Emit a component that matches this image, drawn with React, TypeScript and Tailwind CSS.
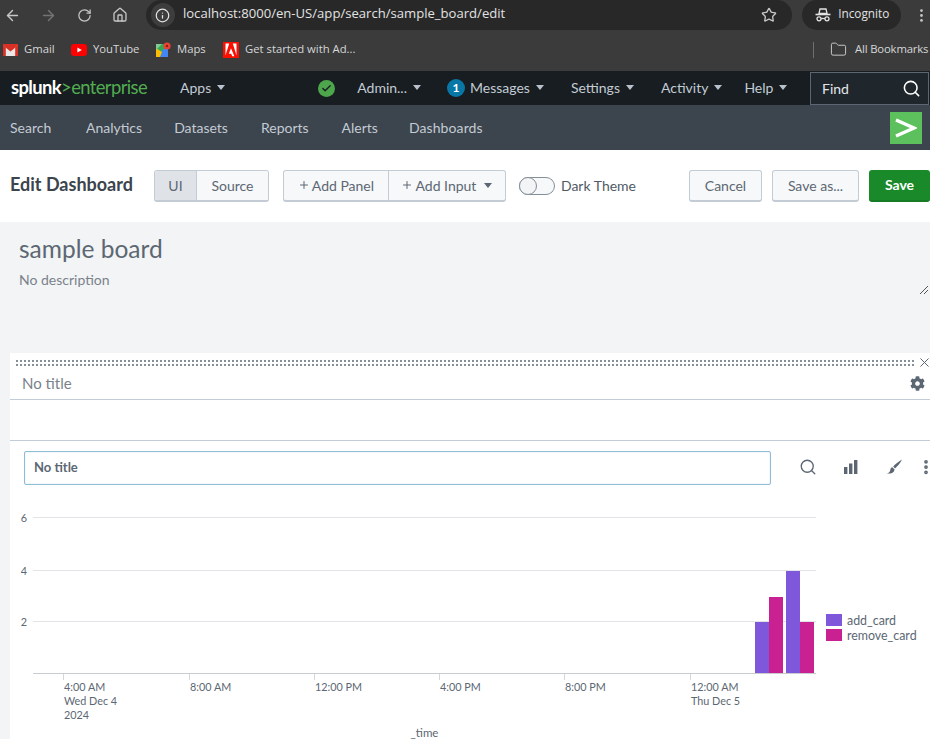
import React from "react";
import { ArrowLeft, ArrowRight, RotateCw, House, Info, Star, EllipsisVertical, Folder, Search, Check, X, Plus } from "lucide-react";
import { FaCog } from "react-icons/fa";

const Caret = ({ className = "border-t-[#b9c2cc]" }: { className?: string }) => (
    <span className={`inline-block ml-[6px] w-0 h-0 border-x-[4px] border-x-transparent border-t-[5px] ${className}`} />
);

const Bookmark = ({ icon, label, className }: { icon: React.ReactNode; label: string; className: string }) => (
    <div className={`flex items-center ${className}`}>
        {icon}
        <span className="ml-[6px] text-[11.3px] text-[#d5d7d9]">{label}</span>
    </div>
);

const TopItem = ({ label, className }: { label: string; className: string }) => (
    <div className={`flex items-center text-[14px] text-[#c3cbd4] ${className}`}>
        {label}
        <Caret />
    </div>
);

const GmailIcon = () => (
    <svg width="15" height="12" viewBox="0 0 16 12" preserveAspectRatio="none">
        <rect width="16" height="12" rx="1" fill="#e8e8e8" />
        <path d="M0 1.5 8 7.5 16 1.5V0H0Z" fill="#d93025" />
        <path d="M0 1v11h3V3.5ZM16 1v11h-3V3.5Z" fill="#d93025" />
    </svg>
);

const YoutubeIcon = () => (
    <svg width="16" height="12" viewBox="0 0 16 12">
        <rect width="16" height="12" rx="3" fill="#ff0000" />
        <path d="M6.4 3.4 10.8 6 6.4 8.6Z" fill="#fff" />
    </svg>
);

const MapsIcon = () => (
    <svg width="15" height="15" viewBox="0 0 15 15">
        <rect y="2" width="12" height="13" fill="#34a853" />
        <path d="M0 15 12 3v12Z" fill="#4285f4" />
        <path d="M0 6 6 10 4 15H0Z" fill="#fbbc04" />
        <path d="M0 2h6L0 8Z" fill="#81c995" />
        <circle cx="11" cy="4" r="3.6" fill="#ea4335" />
        <circle cx="11" cy="4" r="1.2" fill="#8c1d18" />
    </svg>
);

const AdobeIcon = () => (
    <svg width="16" height="16" viewBox="0 0 16 16">
        <rect width="16" height="16" fill="#fa0f00" />
        <path d="M6.2 1.5H2.5v12ZM9.8 1.5h3.7v12ZM8 6.2l3.4 8H9.2l-1-2.5H5.8Z" fill="#fff" />
    </svg>
);

const IncognitoIcon = () => (
    <svg width="16" height="14" viewBox="0 0 16 14" fill="none" stroke="#e3e3e3" strokeWidth="1.3">
        <path d="M5 1h6l1 4.4H4Z" />
        <path d="M0.5 6.5h15" strokeWidth="1.6" />
        <circle cx="4" cy="10.8" r="2" />
        <circle cx="12" cy="10.8" r="2" />
        <path d="M6 10.5h4" />
    </svg>
);

const BarsIcon = () => (
    <svg width="14" height="14" viewBox="0 0 14 14" fill="#5c6773">
        <rect y="7" width="3.4" height="7" />
        <rect x="5" y="3.5" width="3.4" height="10.5" />
        <rect x="10" width="3.4" height="14" />
    </svg>
);

const BrushIcon = () => (
    <svg width="15" height="15" viewBox="0 0 15 15" fill="#5c6773">
        <path d="M15 0.5C12 2 8.5 5 6.2 7.6L8 9.4C10.6 7.2 13.4 4 15 0.5ZM5.4 8.3C3.2 8.6 3.6 11 2.8 12.4 2.2 13.4 1.2 13.8 0 14.5 3.5 15 7 14 7.6 10.4Z" />
    </svg>
);

const xTicks = [
    { x: 63.5, lines: ["4:00 AM", "Wed Dec 4", "2024"] },
    { x: 189.5, lines: ["8:00 AM"] },
    { x: 314.5, lines: ["12:00 PM"] },
    { x: 439.5, lines: ["4:00 PM"] },
    { x: 564.5, lines: ["8:00 PM"] },
    { x: 690.5, lines: ["12:00 AM", "Thu Dec 5"] },
];

const yTicks = [
    { y: 517.5, label: "6" },
    { y: 570.5, label: "4" },
    { y: 621.5, label: "2" },
];

const bars = [
    { x: 755, w: 14, top: 622, fill: "#7e57db" },
    { x: 769, w: 14, top: 597, fill: "#c92092" },
    { x: 786, w: 14, top: 571, fill: "#7e57db" },
    { x: 800, w: 14, top: 622, fill: "#c92092" },
];

// svg coordinates = page coordinates, chart starts at y 505
const Chart = () => (
    <svg width="930" height="234" viewBox="0 505 930 234" className="block" fontFamily="Lato, sans-serif" fontSize="10.8" fill="#5c6773">
        {yTicks.map((t) => (
            <g key={t.label}>
                <line x1="33" x2="816" y1={t.y} y2={t.y} stroke="#e1e4e6" />
                <text x="24" y={t.y + 4} textAnchor="middle">{t.label}</text>
            </g>
        ))}
        {bars.map((b) => (
            <rect key={b.x} x={b.x} y={b.top} width={b.w} height={673 - b.top} fill={b.fill} />
        ))}
        <line x1="33" x2="816" y1="673.5" y2="673.5" stroke="#c8cccf" />
        {xTicks.map((t) => (
            <g key={t.x}>
                <line x1={t.x} x2={t.x} y1="674" y2="680" stroke="#d5d8da" />
                {t.lines.map((l, i) => (
                    <text key={l} x={t.x + 0.5} y={691 + i * 14}>{l}</text>
                ))}
            </g>
        ))}
        <text x="424.5" y="737" textAnchor="middle" fontSize="11.5">_time</text>
        <rect x="826" y="614" width="16" height="12" fill="#7e57db" />
        <rect x="826" y="629" width="16" height="12" fill="#c92092" />
        <text x="847" y="625" fontSize="12.4">add_card</text>
        <text x="847" y="640" fontSize="12.4">remove_card</text>
    </svg>
);

const App: React.FC = () => {
    return (
        <div className="w-[930px] h-[739px] overflow-hidden bg-[#f2f4f5] font-['Lato',sans-serif]">
            {/* browser toolbar */}
            <div className="h-[30px] bg-[#3b3b3b] flex items-center font-['Open_Sans',sans-serif]">
                <ArrowLeft size={17} className="ml-[4px] text-[#c7c7c7]" />
                <ArrowRight size={17} className="ml-[19px] text-[#747474]" />
                <RotateCw size={15} className="ml-[20px] text-[#c7c7c7]" />
                <House size={16} className="ml-[20px] text-[#c7c7c7]" />
                <div className="ml-[18px] w-[647px] h-[30px] rounded-[15px] bg-[#282828] flex items-center">
                    <div className="ml-[5px] w-[24px] h-[24px] rounded-full bg-[#3d3d3d] flex items-center justify-center">
                        <Info size={15} className="text-[#e3e3e3]" />
                    </div>
                    <span className="ml-[8px] mb-[2px] text-[13.1px] text-[#e3e3e3]">localhost:8000/en-US/app/search/sample_board/edit</span>
                    <Star size={16} className="ml-auto mr-[15px] text-[#c7c7c7]" />
                </div>
                <div className="ml-[10px] w-[99px] h-[30px] rounded-[15px] bg-[#282828] flex items-center">
                    <div className="ml-[13px]"><IncognitoIcon /></div>
                    <span className="ml-[7px] mb-[2px] text-[11.8px] text-[#e3e3e3]">Incognito</span>
                </div>
                <EllipsisVertical size={17} className="ml-[12px] text-[#c7c7c7]" />
            </div>
            {/* bookmarks */}
            <div className="h-[41px] bg-[#3b3b3b] flex items-center pb-[2px] font-['Open_Sans',sans-serif]">
                <Bookmark className="ml-[3px] w-[68px]" icon={<GmailIcon />} label="Gmail" />
                <Bookmark className="w-[85px]" icon={<YoutubeIcon />} label="YouTube" />
                <Bookmark className="w-[67px]" icon={<MapsIcon />} label="Maps" />
                <Bookmark className="w-[140px]" icon={<AdobeIcon />} label="Get started with Ad..." />
                <div className="ml-auto w-[1px] h-[16px] bg-[#6f6f6f]" />
                <Folder size={17} className="ml-[16px] shrink-0 text-[#c7c7c7]" strokeWidth={1.4} />
                <span className="ml-[8px] w-[75px] text-[11.3px] tracking-[-0.15px] whitespace-nowrap text-[#d5d7d9]">All Bookmarks</span>
            </div>
            {/* splunk bar */}
            <div className="h-[34px] bg-[#171d21] flex items-center">
                <div className="ml-[11px] w-[135px] pb-[2px] text-[18.4px] tracking-[-0.6px] leading-none whitespace-nowrap">
                    <span className="font-bold text-white">splunk</span>
                    <span className="text-[#52ad50]">&gt;enterprise</span>
                </div>
                <TopItem className="ml-[34px] pb-[2px]" label="Apps" />
                <div className="ml-[93px] w-[17px] h-[17px] rounded-full bg-[#4ea64c] flex items-center justify-center">
                    <Check size={11} strokeWidth={3} className="text-[#171d21]" />
                </div>
                <TopItem className="ml-[22px] pb-[2px]" label="Admin..." />
                <div className="ml-[26px] w-[18px] h-[18px] rounded-full bg-[#0877a6] text-white text-[12px] font-bold flex items-center justify-center">1</div>
                <TopItem className="ml-[5px] pb-[2px]" label="Messages" />
                <TopItem className="ml-[27px] pb-[2px]" label="Settings" />
                <TopItem className="ml-[27px] pb-[2px]" label="Activity" />
                <TopItem className="ml-[22px] pb-[2px]" label="Help" />
                <div className="ml-auto mr-[1px] w-[119px] h-[33px] self-end border border-[#5c6773] bg-[#1f262c] flex items-center pl-[11px] pr-[7px] text-[14px] text-[#e1e6eb]">
                    Find
                    <Search size={19} className="ml-auto text-white" strokeWidth={2} />
                </div>
            </div>
            {/* app bar */}
            <div className="h-[45px] bg-[#3c444d] flex items-center text-[14px] text-[#c3cbd4]">
                <span className="ml-[10px] w-[43px] mb-[1px]">Search</span>
                <span className="ml-[33px] mb-[1px]">Analytics</span>
                <span className="ml-[32px] mb-[1px]">Datasets</span>
                <span className="ml-[33px] mb-[1px]">Reports</span>
                <span className="ml-[33px] mb-[1px]">Alerts</span>
                <span className="ml-[31px] mb-[1px] tracking-[0.1px]">Dashboards</span>
                <div className="ml-auto mr-[8px] w-[32px] h-[32px] bg-[#5cc05c] flex items-center justify-center">
                    <svg width="22" height="22" viewBox="0 0 22 22" fill="none" stroke="#fff" strokeWidth="3.4">
                        <path d="M1 3 19 11 1 19" />
                    </svg>
                </div>
            </div>
            {/* edit bar */}
            <div className="h-[72px] bg-white flex items-center text-[14px] text-[#5c6773]">
                <span className="ml-[10px] mb-[3px] text-[18px] font-bold text-[#3c444d] whitespace-nowrap">Edit Dashboard</span>
                <div className="ml-[21px] h-[32px] shrink-0 flex rounded-[3px] border border-[#c3cbd4] border-b-2 overflow-hidden">
                    <div className="w-[42px] pb-[1px] bg-[#dfe3e8] border-r border-[#c3cbd4] flex items-center justify-center">UI</div>
                    <div className="w-[71px] pb-[1px] bg-[#f7f8fa] flex items-center justify-center">Source</div>
                </div>
                <div className="ml-[14px] h-[32px] shrink-0 flex rounded-[3px] border border-[#c3cbd4] border-b-2 overflow-hidden bg-[#f7f8fa]">
                    <div className="w-[105px] pb-[1px] border-r border-[#c3cbd4] flex items-center justify-center"><Plus size={12} className="mr-[2px]" />Add Panel</div>
                    <div className="w-[116px] pb-[1px] flex items-center justify-center"><Plus size={12} className="mr-[2px]" />Add Input<Caret className="border-t-[#5c6773] ml-[8px]" /></div>
                </div>
                <div className="ml-[13px] relative shrink-0 w-[36px] h-[18px] rounded-full border border-[#868e96] bg-[#f7f8fa]">
                    <div className="absolute left-[-1px] top-[-1px] w-[18px] h-[18px] rounded-full border border-[#868e96] bg-[#f2f4f5]" />
                </div>
                <span className="ml-[6px] mb-[1px] text-[#4f5a65] whitespace-nowrap">Dark Theme</span>
                <div className="ml-[53px] w-[73px] pb-[1px] shrink-0 h-[32px] rounded-[3px] border border-[#c3cbd4] border-b-2 bg-[#f7f8fa] flex items-center justify-center">Cancel</div>
                <div className="ml-[10px] w-[87px] pb-[1px] shrink-0 h-[32px] rounded-[3px] border border-[#c3cbd4] border-b-2 bg-[#f7f8fa] flex items-center justify-center">Save as...</div>
                <div className="ml-[10px] w-[61px] pb-[1px] shrink-0 h-[32px] rounded-[3px] bg-[#1a8929] border-b-2 border-[#177a25] text-white font-bold flex items-center justify-center">Save</div>
            </div>
            {/* title */}
            <div className="relative h-[131px] pl-[19px] pt-[12px]">
                <div className="text-[24.5px] leading-[30px] text-[#5c6773]">sample board</div>
                <div className="mt-[6px] text-[14px] leading-[20px] text-[#7a828b]">No description</div>
                <svg width="10" height="10" viewBox="0 0 10 10" className="absolute right-[1px] top-[63px]" stroke="#555">
                    <path d="M1 9 9 1M5 9 9 5" />
                </svg>
            </div>
            {/* panel */}
            <div className="ml-[10px] bg-white">
                <div className="h-[14px] relative flex items-center pl-[5px]">
                    <div className="w-[901px] h-[7px] mt-[4px] bg-[radial-gradient(#868e96_1px,transparent_1.2px)] bg-[length:4px_4px]" />
                    <X size={15} strokeWidth={1.6} className="absolute right-[-2px] top-[2px] text-[#5c6773]" />
                </div>
                <div className="h-[33px] border-b border-[#c3cbd4] flex items-center pl-[12px] pr-[5px] text-[15px] text-[#7a828b]">
                    <span className="mt-[1px]">No title</span>
                    <FaCog size={15} className="ml-auto text-[#5c6773]" />
                </div>
                <div className="h-[41px] border-b border-[#c3cbd4]" />
                <div className="h-[64px] flex items-start pt-[10px] pl-[14px]">
                    <div className="w-[747px] shrink-0 h-[34px] rounded-[2px] border border-[#8fbcd9] flex items-center pl-[9px] text-[13px] font-bold text-[#5c6773] shadow-[inset_0_0_2px_#d5e5f0]">No title</div>
                    <Search size={18} strokeWidth={1.8} className="ml-[28px] mt-[7px] shrink-0 text-[#5c6773]" />
                    <div className="ml-[27px] mt-[9px] shrink-0"><BarsIcon /></div>
                    <div className="ml-[29px] mt-[8px] shrink-0"><BrushIcon /></div>
                    <EllipsisVertical size={18} strokeWidth={3} className="ml-[15px] mt-[7px] shrink-0 text-[#5c6773]" />
                </div>
                <div className="-ml-[10px]">
                    <Chart />
                </div>
            </div>
        </div>
    );
};

export default App;
